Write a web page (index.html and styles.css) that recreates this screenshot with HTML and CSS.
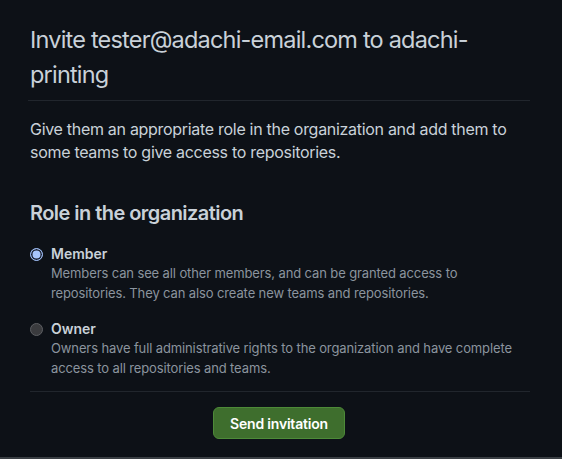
FILE: index.html
```html
<!DOCTYPE html>
<html>
<head>
<meta charset="utf-8">
<link rel="stylesheet" href="styles.css">
</head>
<body>
<main class="page">
  <h1 class="title">Invite tester@adachi-email.com to adachi-printing</h1>
  <p class="lead">Give them an appropriate role in the organization and add them to some teams to give access to repositories.</p>
  <h2 class="section">Role in the organization</h2>
  <div class="roles">
    <label class="role">
      <span class="radio radio-on"></span>
      <span class="role-text">
        <span class="role-name">Member</span>
        <span class="role-desc">Members can see all other members, and can be granted access to repositories. They can also create new teams and repositories.</span>
      </span>
    </label>
    <label class="role">
      <span class="radio"></span>
      <span class="role-text">
        <span class="role-name">Owner</span>
        <span class="role-desc">Owners have full administrative rights to the organization and have complete access to all repositories and teams.</span>
      </span>
    </label>
  </div>
  <div class="actions">
    <button class="btn-primary">Send invitation</button>
  </div>
</main>
<div class="bottom-bar"></div>
</body>
</html>
```

FILE: styles.css
```css
html, body {
  margin: 0;
  padding: 0;
  background: #0d1117;
  height: 100%;
}
body {
  font-family: Inter, "Noto Sans", "Liberation Sans", sans-serif;
  color: #c9d1d9;
  display: flex;
  flex-direction: column;
}
.page {
  flex: 1;
  padding: 22px 32px 0 28px;
}
.title {
  margin: 0;
  font-size: 23.5px;
  font-weight: 400;
  line-height: 35px;
  padding: 0 0 8px 2px;
  border-bottom: 1px solid #21262d;
  color: #c9d1d9;
  letter-spacing: -0.8px;
}
.lead {
  margin: 17px 0 0 2px;
  font-size: 16px;
  line-height: 23px;
  color: #c9d1d9;
  letter-spacing: -0.3px;
  max-width: 490px;
}
.section {
  margin: 34px 0 0 2px;
  font-size: 20px;
  font-weight: 600;
  line-height: 30px;
  color: #c9d1d9;
  letter-spacing: -0.55px;
}
.roles {
  margin: 16px 0 0 2px;
  display: flex;
  flex-direction: column;
  gap: 16px;
  padding-bottom: 13px;
  border-bottom: 1px solid #21262d;
}
.role {
  display: flex;
  gap: 8px;
  align-items: flex-start;
}
.radio {
  flex: none;
  width: 13px;
  height: 13px;
  box-sizing: border-box;
  border-radius: 50%;
  margin-top: 4px;
  background: #3a3b3e;
  border: 1px solid #5d5f63;
}
.radio-on {
  background: #a7c5fb;
  border: 1px solid #9dbcf4;
  box-shadow: inset 0 0 0 1.5px #1a2030;
}
.role-text {
  display: flex;
  flex-direction: column;
}
.role-name {
  font-size: 14px;
  font-weight: 600;
  line-height: 20px;
  color: #c9d1d9;
}
.role-desc {
  font-size: 13px;
  line-height: 19.5px;
  color: #8b949e;
  letter-spacing: -0.12px;
  max-width: 470px;
}
.actions {
  display: flex;
  justify-content: center;
  padding-top: 15px;
}
.btn-primary {
  font-family: inherit;
  font-size: 14px;
  font-weight: 600;
  color: #ffffff;
  background: #3e6e2d;
  border: 1px solid #4d8a38;
  border-radius: 6px;
  height: 32px;
  padding: 0 16px;
  white-space: nowrap;
  letter-spacing: -0.2px;
}
.bottom-bar {
  height: 2px;
  background: #3a3f44;
}
```
